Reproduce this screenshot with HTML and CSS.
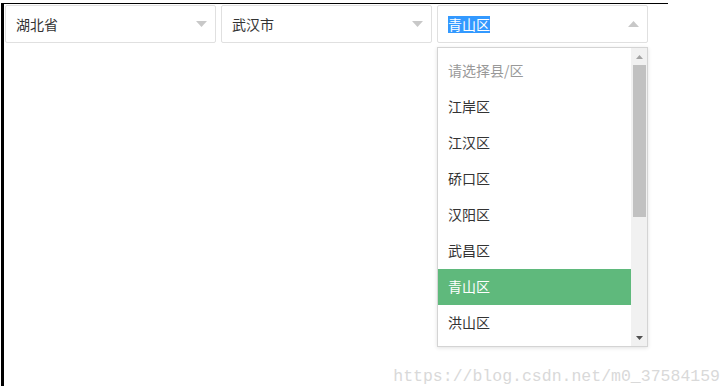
FILE: index.html
```html
<!DOCTYPE html>
<html lang="zh-CN">
<head>
<meta charset="utf-8">
<title>省市区联动</title>
<link rel="stylesheet" href="styles.css">
</head>
<body>
<div class="frame">
  <div class="selects">
    <div class="sel">
      <span class="val">湖北省</span>
      <svg class="caret" width="11" height="6" viewBox="0 0 11 6"><path d="M0 0H11L5.5 6Z" fill="#c8c8c8"/></svg>
    </div>
    <div class="sel">
      <span class="val">武汉市</span>
      <svg class="caret" width="11" height="6" viewBox="0 0 11 6"><path d="M0 0H11L5.5 6Z" fill="#c8c8c8"/></svg>
    </div>
    <div class="sel-wrap">
      <div class="sel">
        <span class="val picked">青山区</span>
        <svg class="caret" width="11" height="6" viewBox="0 0 11 6"><path d="M0 6H11L5.5 0Z" fill="#c8c8c8"/></svg>
      </div>
      <div class="dropdown">
        <ul class="options">
          <li class="placeholder">请选择县/区</li>
          <li>江岸区</li>
          <li>江汉区</li>
          <li>硚口区</li>
          <li>汉阳区</li>
          <li>武昌区</li>
          <li class="active">青山区</li>
          <li>洪山区</li>
          <li>东西湖区</li>
          <li>汉南区</li>
          <li>蔡甸区</li>
          <li>江夏区</li>
          <li>黄陂区</li>
          <li>新洲区</li>
        </ul>
        <div class="scrollbar">
          <div class="sb-btn"><svg width="7" height="4" viewBox="0 0 7 4"><path d="M0 4H7L3.5 0Z" fill="#a3a3a3"/></svg></div>
          <div class="sb-thumb"></div>
          <div class="sb-space"></div>
          <div class="sb-btn"><svg width="7" height="4" viewBox="0 0 7 4"><path d="M0 0H7L3.5 4Z" fill="#505050"/></svg></div>
        </div>
      </div>
    </div>
  </div>
</div>
<div class="watermark">https://blog.csdn.net/m0_37584159</div>
</body>
</html>
```
FILE: styles.css
```css
html, body {
  margin: 0;
  padding: 0;
  background: #fff;
}
body {
  position: relative;
  width: 724px;
  height: 389px;
  overflow: hidden;
  font-family: "Noto Sans CJK SC", "Microsoft YaHei", sans-serif;
  font-size: 14px;
  color: #333;
}
.frame {
  margin: 3px 0 0 1px;
  width: 664px;
  height: 382px;
  border-top: 1px solid #000;
  border-left: 3px solid #000;
}
.selects {
  display: flex;
  gap: 5px;
  padding: 1px 0 0 1px;
}
.sel-wrap {
  position: relative;
}
.sel {
  box-sizing: border-box;
  width: 211px;
  height: 38px;
  border: 1px solid #e0e0e0;
  border-radius: 2px;
  display: flex;
  align-items: center;
  justify-content: space-between;
  padding: 0 8px 0 10px;
  background: #fff;
}
.val {
  line-height: 17px;
}
.picked {
  display: inline-block;
  height: 17px;
  background: #3399ff;
  color: #fff;
}
.caret {
  display: block;
}
.dropdown {
  position: absolute;
  top: 42px;
  left: 0;
  box-sizing: border-box;
  width: 211px;
  height: 300px;
  border: 1px solid #d4d4d4;
  background: #fff;
  box-shadow: 0 1px 4px rgba(0, 0, 0, 0.12);
  display: flex;
}
.options {
  flex: 1;
  list-style: none;
  margin: 0;
  padding: 5px 0 0;
  overflow: hidden;
}
.options li {
  height: 36px;
  line-height: 34px;
  padding-left: 10px;
  color: #333;
  white-space: nowrap;
}
.options li.placeholder {
  color: #999;
}
.options li.active {
  background: #5fb97c;
  color: #fff;
}
.scrollbar {
  width: 16px;
  background: #f1f1f1;
  display: flex;
  flex-direction: column;
}
.sb-btn {
  height: 17px;
  display: flex;
  align-items: center;
  justify-content: center;
}
.sb-btn svg {
  display: block;
}
.sb-thumb {
  height: 152px;
  margin: 0 1px 0 2px;
  background: #c1c1c1;
}
.sb-space {
  flex: 1;
}
.watermark {
  position: absolute;
  right: 4px;
  bottom: 2px;
  font-family: "Liberation Mono", "DejaVu Sans Mono", monospace;
  font-size: 16.5px;
  line-height: 20px;
  color: #d9d9d9;
  white-space: nowrap;
}
```
